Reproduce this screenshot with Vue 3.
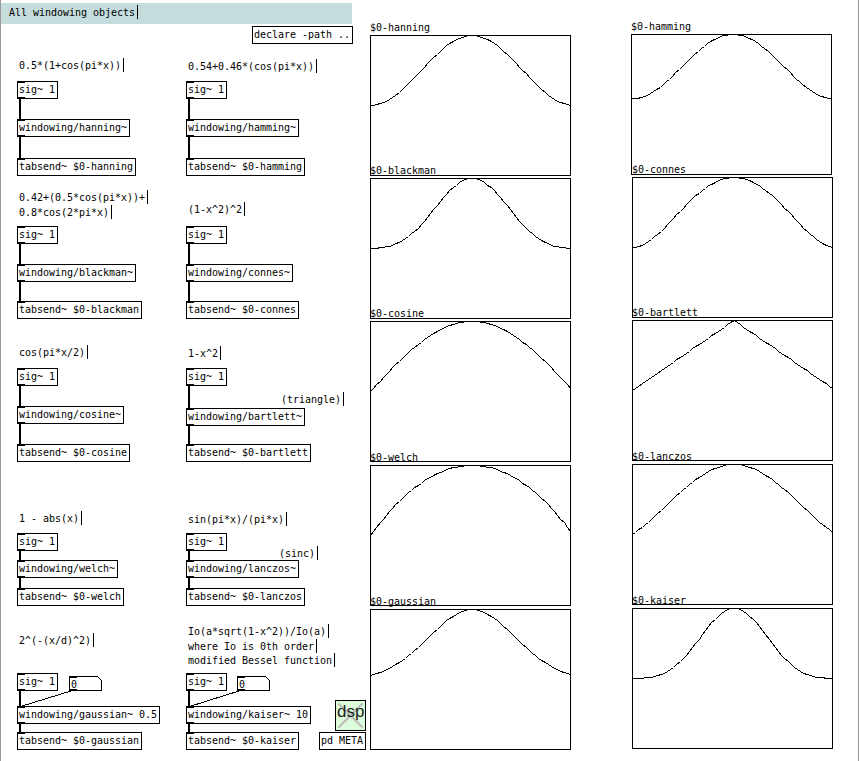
<script setup>
// Patch canvas: every item is placed at its own canvas coordinates.
const CHAR = 6

const obj = (x, y, text, inlet = true, outlet = true) => ({ x, y, text, inlet, outlet })

const chains = [
  { x: 17, ys: [81, 119, 158], name: 'hanning' },
  { x: 186, ys: [81, 119, 158], name: 'hamming' },
  { x: 17, ys: [226, 264, 301], name: 'blackman' },
  { x: 186, ys: [226, 264, 301], name: 'connes' },
  { x: 17, ys: [368, 406, 444], name: 'cosine' },
  { x: 186, ys: [368, 408, 444], name: 'bartlett' },
  { x: 17, ys: [533, 560, 588], name: 'welch' },
  { x: 186, ys: [533, 560, 588], name: 'lanczos' },
  { x: 17, ys: [673, 706, 732], name: 'gaussian', arg: ' 0.5' },
  { x: 186, ys: [673, 706, 732], name: 'kaiser', arg: ' 10' },
]

const objects = [
  obj(252, 26, 'declare -path ..', false, false),
  obj(319, 732, 'pd META', false, false),
  ...chains.flatMap((c) => [
    obj(c.x, c.ys[0], 'sig~ 1'),
    obj(c.x, c.ys[1], `windowing/${c.name}~${c.arg ?? ''}`),
    obj(c.x, c.ys[2], `tabsend~ $0-${c.name}`, true, false),
  ]),
]

const cords = chains.flatMap((c) => [
  { x: c.x + 2, y: c.ys[0] + 18, h: c.ys[1] - c.ys[0] - 18 },
  { x: c.x + 2, y: c.ys[1] + 18, h: c.ys[2] - c.ys[1] - 18 },
])

const numbers = [
  { x: 69, y: 676 },
  { x: 237, y: 676 },
]
const controlCords = [
  { x1: 72.5, y1: 690.5, x2: 20.5, y2: 706.5 },
  { x1: 240.5, y1: 690.5, x2: 189.5, y2: 706.5 },
]

const comments = [
  { x: 9, y: 5, text: 'All windowing objects' },
  { x: 19, y: 58, text: '0.5*(1+cos(pi*x))' },
  { x: 188, y: 59, text: '0.54+0.46*(cos(pi*x))' },
  { x: 19, y: 190, text: '0.42+(0.5*cos(pi*x))+' },
  { x: 19, y: 205, text: '0.8*cos(2*pi*x)' },
  { x: 188, y: 202, text: '(1-x^2)^2' },
  { x: 19, y: 345, text: 'cos(pi*x/2)' },
  { x: 188, y: 346, text: '1-x^2' },
  { x: 281, y: 392, text: '(triangle)' },
  { x: 19, y: 511, text: '1 - abs(x)' },
  { x: 188, y: 512, text: 'sin(pi*x)/(pi*x)' },
  { x: 279, y: 546, text: '(sinc)' },
  { x: 19, y: 633, text: '2^(-(x/d)^2)' },
  { x: 188, y: 624, text: 'Io(a*sqrt(1-x^2))/Io(a)' },
  { x: 188, y: 639, text: 'where Io is 0th order' },
  { x: 188, y: 653, text: 'modified Bessel function' },
]

function bessel0(v) {
  let sum = 1
  let term = 1
  for (let k = 1; k < 40; k++) {
    term *= (v / (2 * k)) ** 2
    sum += term
  }
  return sum
}

const { PI, cos, sin, abs, sqrt } = Math
const graphs = [
  { x: 370, y: 35, name: 'hanning', f: (x) => 0.5 * (1 + cos(PI * x)) },
  { x: 631, y: 34, name: 'hamming', f: (x) => 0.54 + 0.46 * cos(PI * x) },
  { x: 370, y: 178, name: 'blackman', f: (x) => 0.42 + 0.5 * cos(PI * x) + 0.08 * cos(2 * PI * x) },
  { x: 632, y: 177, name: 'connes', f: (x) => (1 - x * x) ** 2 },
  { x: 370, y: 321, name: 'cosine', f: (x) => cos((PI * x) / 2) },
  { x: 632, y: 320, name: 'bartlett', f: (x) => 1 - abs(x) },
  { x: 370, y: 465, name: 'welch', f: (x) => 1 - x * x },
  { x: 632, y: 464, name: 'lanczos', f: (x) => (x === 0 ? 1 : sin(PI * x) / (PI * x)) },
  { x: 370, y: 609, name: 'gaussian', f: (x) => 2 ** -((x / 0.5) ** 2) },
  { x: 632, y: 608, name: 'kaiser', f: (x) => bessel0(10 * sqrt(1 - x * x)) / bessel0(10) },
]

// 64 samples over a 200px wide graph; 1 is the top edge and 0 the middle.
function trace(f) {
  return Array.from({ length: 64 }, (_, i) => {
    const px = Math.round((i * 200) / 63)
    const py = Math.round(70 - 70 * f((i - 32) / 32))
    return `${px + 0.5},${py + 0.5}`
  }).join(' ')
}

const at = (o) => ({ left: `${o.x}px`, top: `${o.y}px` })
</script>

<template>
  <main class="canvas">
    <div class="banner"></div>

    <div v-for="(c, i) in comments" :key="'c' + i" class="comment" :style="at(c)">{{ c.text }}</div>

    <section v-for="g in graphs" :key="g.name" class="graph" :style="at(g)">
      <span class="graph-label">$0-{{ g.name }}</span>
      <svg class="plot" width="201" height="141" viewBox="0 0 201 141">
        <rect class="frame" x="0.5" y="0.5" width="200" height="140" />
        <polyline class="curve" :points="trace(g.f)" />
      </svg>
    </section>

    <div
      v-for="(c, i) in cords"
      :key="'s' + i"
      class="cord"
      :style="{ ...at(c), height: c.h + 'px' }"
    ></div>
    <svg class="control-cords" width="859" height="761" viewBox="0 0 859 761">
      <line v-for="(c, i) in controlCords" :key="i" v-bind="c" />
    </svg>

    <div
      v-for="(o, i) in objects"
      :key="'o' + i"
      class="object"
      :class="{ inlet: o.inlet, outlet: o.outlet }"
      :style="{ ...at(o), width: o.text.length * CHAR + 5 + 'px' }"
    >{{ o.text }}</div>

    <div v-for="(n, i) in numbers" :key="'n' + i" class="number" :style="at(n)">
      <svg class="number-shape" width="33" height="15" viewBox="0 0 33 15">
        <path d="M0.5 0.5H28.5L32.5 4.5V14.5H0.5Z" />
        <path class="port" d="M0 0H8V2H0ZM0 13H8V15H0Z" />
      </svg>
      <span class="number-value">0</span>
    </div>

    <div class="dsp">
      <svg class="cross" width="29" height="29" viewBox="0 0 29 29">
        <path d="M2.5 2.5L26.5 26.5M26.5 2.5L2.5 26.5" />
      </svg>
      <span class="dsp-label">dsp</span>
    </div>
  </main>
</template>

<style>
body {
  margin: 0;
  background: #fff;
}
</style>

<style scoped>
.canvas {
  position: relative;
  box-sizing: border-box;
  width: 859px;
  height: 761px;
  overflow: hidden;
  border: solid #999;
  border-width: 0 1px;
  background: #fff;
  color: #000;
  font: 10px/14px "DejaVu Sans Mono", monospace;
  letter-spacing: -0.02px;
  white-space: pre;
}

/* The left border shifts the origin by one pixel. */
.canvas > * {
  position: absolute;
  margin-left: -1px;
}

.banner {
  left: 1px;
  top: 3px;
  width: 351px;
  height: 21px;
  background: #c4dcdc;
}

.comment {
  height: 14px;
  padding-right: 2px;
  line-height: 16px;
  border-right: 1px solid #000;
}

.object {
  box-sizing: border-box;
  height: 18px;
  padding-left: 1px;
  border: 1px solid #000;
  background: #fff;
  line-height: 16px;
}

.inlet::before,
.outlet::after {
  content: "";
  position: absolute;
  left: -1px;
  width: 8px;
  height: 2px;
  background: #000;
}

.inlet::before {
  top: -1px;
}

.outlet::after {
  bottom: -1px;
}

.cord {
  width: 2px;
  background: #000;
}

.control-cords {
  left: 0;
  top: 0;
  stroke: #000;
  shape-rendering: crispEdges;
}

.number {
  width: 33px;
  height: 15px;
}

.number-shape {
  display: block;
  fill: #fff;
  stroke: #000;
  shape-rendering: crispEdges;
}

.number-shape .port {
  fill: #000;
  stroke: none;
}

.number-value {
  position: absolute;
  left: 2px;
  top: 1px;
  line-height: 16px;
}

.graph {
  width: 201px;
  height: 141px;
}

.graph-label {
  position: absolute;
  left: 0;
  top: -14px;
}

.plot {
  display: block;
  fill: none;
  stroke: #000;
  shape-rendering: crispEdges;
}

.dsp {
  left: 335px;
  top: 700px;
  box-sizing: border-box;
  width: 31px;
  height: 31px;
  border: 1px solid #000;
  background: #dcfcdc;
}

.cross {
  display: block;
  stroke: #bbb;
  stroke-width: 2;
}

.dsp-label {
  position: absolute;
  left: 1px;
  top: 1px;
  color: #222;
  font: 17px/20px "Liberation Sans", Arial, sans-serif;
  letter-spacing: 0;
}
</style>
